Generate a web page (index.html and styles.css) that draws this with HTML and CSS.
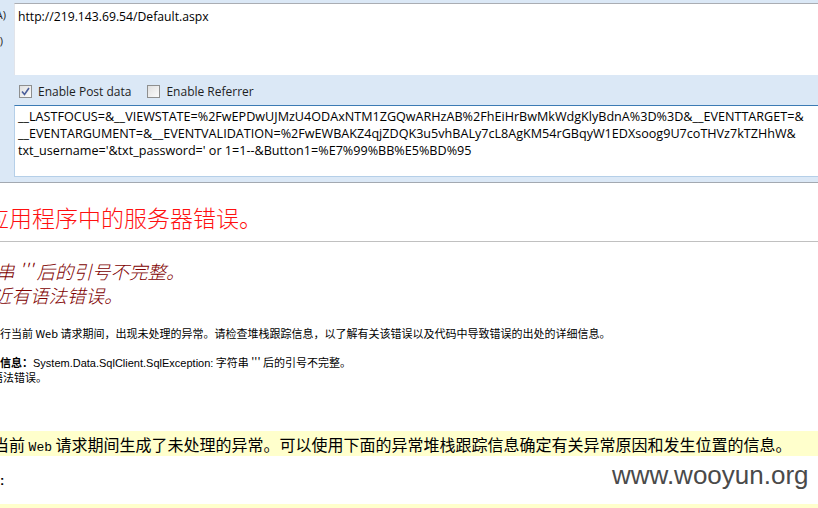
FILE: index.html
```html
<!DOCTYPE html>
<html lang="zh-CN">
<head>
  <meta charset="UTF-8">
  <title>HackBar - 服务器错误</title>
  <link rel="stylesheet" href="styles.css">
</head>
<body>

  <div class="hackbar">
    <div class="side">
      <span>(A)</span>
      <span>(S)</span>
    </div>
    <div class="main">
      <div class="url">http://219.143.69.54/Default.aspx</div>
      <div class="opts">
        <label class="opt">
          <span class="cb">
            <svg width="9" height="9" viewBox="0 0 9 9"><path d="M1 4.5 L3.5 7.5 L8 1" fill="none" stroke="#4b5e9a" stroke-width="1.6"/></svg>
          </span>
          Enable Post data
        </label>
        <label class="opt">
          <span class="cb"></span>
          Enable Referrer
        </label>
      </div>
      <div class="post">__LASTFOCUS=&amp;__VIEWSTATE=%2FwEPDwUJMzU4ODAxNTM1ZGQwARHzAB%2FhEiHrBwMkWdgKlyBdnA%3D%3D&amp;__EVENTTARGET=&amp;<br>__EVENTARGUMENT=&amp;__EVENTVALIDATION=%2FwEWBAKZ4qjZDQK3u5vhBALy7cL8AgKM54rGBqyW1EDXsoog9U7coTHVz7kTZHhW&amp;<br>txt_username='&amp;txt_password=' or 1=1--&amp;Button1=%E7%99%BB%E5%BD%95</div>
    </div>
  </div>

  <div class="page">
    <h1 class="title">应用程序中的服务器错误。</h1>
    <hr class="rule">

    <h2 class="msg">
      <span class="l1">串 ''' 后的引号不完整。</span>
      <span class="l2">近有语法错误。</span>
    </h2>

    <p class="desc">行当前 Web 请求期间，出现未处理的异常。请检查堆栈跟踪信息，以了解有关该错误以及代码中导致错误的出处的详细信息。</p>

    <p class="detail">
      <span class="d1"><b>信息：</b><span class="lat">System.Data.SqlClient.SqlException:</span> 字符串 ''' 后的引号不完整。</span>
      <span class="d2">语法错误。</span>
    </p>

    <div class="code"><code>当前 <span class="web">Web</span> 请求期间生成了未处理的异常。可以使用下面的异常堆栈跟踪信息确定有关异常原因和发生位置的信息。</code></div>

    <p class="stack"><b>:</b></p>

    <div class="code tail"></div>
  </div>

  <div class="mark">www.wooyun.org</div>

</body>
</html>
```

FILE: styles.css
```css
html, body {
  margin: 0;
  height: 100%;
  overflow: hidden;
}

body {
  background: #fff;
  color: #000;
  font-family: 'Liberation Sans', 'Noto Sans CJK TC', sans-serif;
  position: relative;
}

/* barra superior */
.hackbar {
  display: flex;
  background: #dbe8f6;
  border-bottom: 1px solid #a3a9b1;
  height: 182px;
  font-family: 'Open Sans', sans-serif;
  font-size: 12px;
}

.side {
  width: 14px;
  overflow: hidden;
  display: flex;
  flex-direction: column;
  align-items: flex-end;
  padding-right: 8px;
  box-sizing: border-box;
  color: #222;
  font-size: 11px;
}

.side span {
  display: block;
  white-space: nowrap;
  height: 14px;
}

.side span:first-child { margin-top: 7px; }
.side span + span { margin-top: 12px; margin-right: 3px; }

.main {
  flex: 1;
  min-width: 0;
}

.url {
  margin-top: 3px;
  height: 72px;
  box-sizing: border-box;
  background: #fff;
  border-top: 1px solid #aaadb3;
  border-left: 1px solid #e1e4ea;
  padding: 4px 3px;
  font-size: 12.2px;
  line-height: 17px;
  white-space: nowrap;
}

.opts {
  height: 30px;
  display: flex;
  align-items: center;
  gap: 16px;
  padding-left: 5px;
  padding-top: 2px;
  box-sizing: border-box;
}

.opt {
  display: flex;
  align-items: center;
  gap: 6px;
  color: #1e1e1e;
}

.cb {
  width: 11px;
  height: 11px;
  border: 1px solid #8e8f8f;
  background: linear-gradient(135deg, #e0e0e0, #fbfbfb);
  display: flex;
  align-items: center;
  justify-content: center;
}

.post {
  height: 72px;
  box-sizing: border-box;
  background: #fff;
  border: 1px solid #b5cfe8;
  border-top-color: #3c7bb4;
  border-right: 0;
  padding: 2px 3px;
  font-size: 12.6px;
  line-height: 17px;
  white-space: nowrap;
  overflow: hidden;
}

/* página de erro */
.page {
  padding-top: 1px;
}

.title {
  margin: 20px 0 0 -14px;
  font-family: 'Noto Sans CJK TC', sans-serif;
  font-weight: 300;
  font-size: 23px;
  line-height: 26px;
  color: #ff1010;
  white-space: nowrap;
}

.rule {
  margin: 11px 0 0;
  border: 0;
  border-top: 1px solid #c0c0c0;
}

.msg {
  margin: 17px 0 0;
  font-family: 'Noto Sans CJK TC', sans-serif;
  font-weight: 300;
  font-style: italic;
  font-size: 18.5px;
  line-height: 24px;
  color: #800000;
  white-space: nowrap;
}

.msg span { display: block; }
.msg .l1 { margin-left: -4px; }
.msg .l2 { margin-left: -7px; }

.desc {
  margin: 19px 0 0;
  font-family: 'Noto Sans CJK TC', sans-serif;
  font-size: 11px;
  line-height: 14px;
  white-space: nowrap;
}

.detail {
  margin: 15px 0 0;
  font-family: 'Noto Sans CJK TC', sans-serif;
  font-size: 11px;
  line-height: 14px;
  white-space: nowrap;
}

.detail span.d1, .detail span.d2 { display: block; }
.detail .d2 { margin-left: -8px; }
.detail .lat { font-family: 'Liberation Sans', sans-serif; }

.code {
  margin-top: 47px;
  background: #ffffcc;
  height: 25px;
  display: flex;
  align-items: center;
  white-space: nowrap;
  overflow: hidden;
}

.code code {
  font-family: 'Noto Sans CJK TC', monospace;
  font-size: 16px;
  margin-left: -7px;
}

.code .web {
  font-family: 'Liberation Mono', monospace;
  font-size: 13px;
}

.stack {
  margin: 17px 0 0;
  font-size: 13px;
  line-height: 16px;
}

.code.tail {
  margin-top: 15px;
  height: 10px;
}

.mark {
  position: absolute;
  left: 612px;
  top: 460px;
  font-family: 'Liberation Sans', sans-serif;
  font-size: 26px;
  color: #4a4a4a;
}
```
